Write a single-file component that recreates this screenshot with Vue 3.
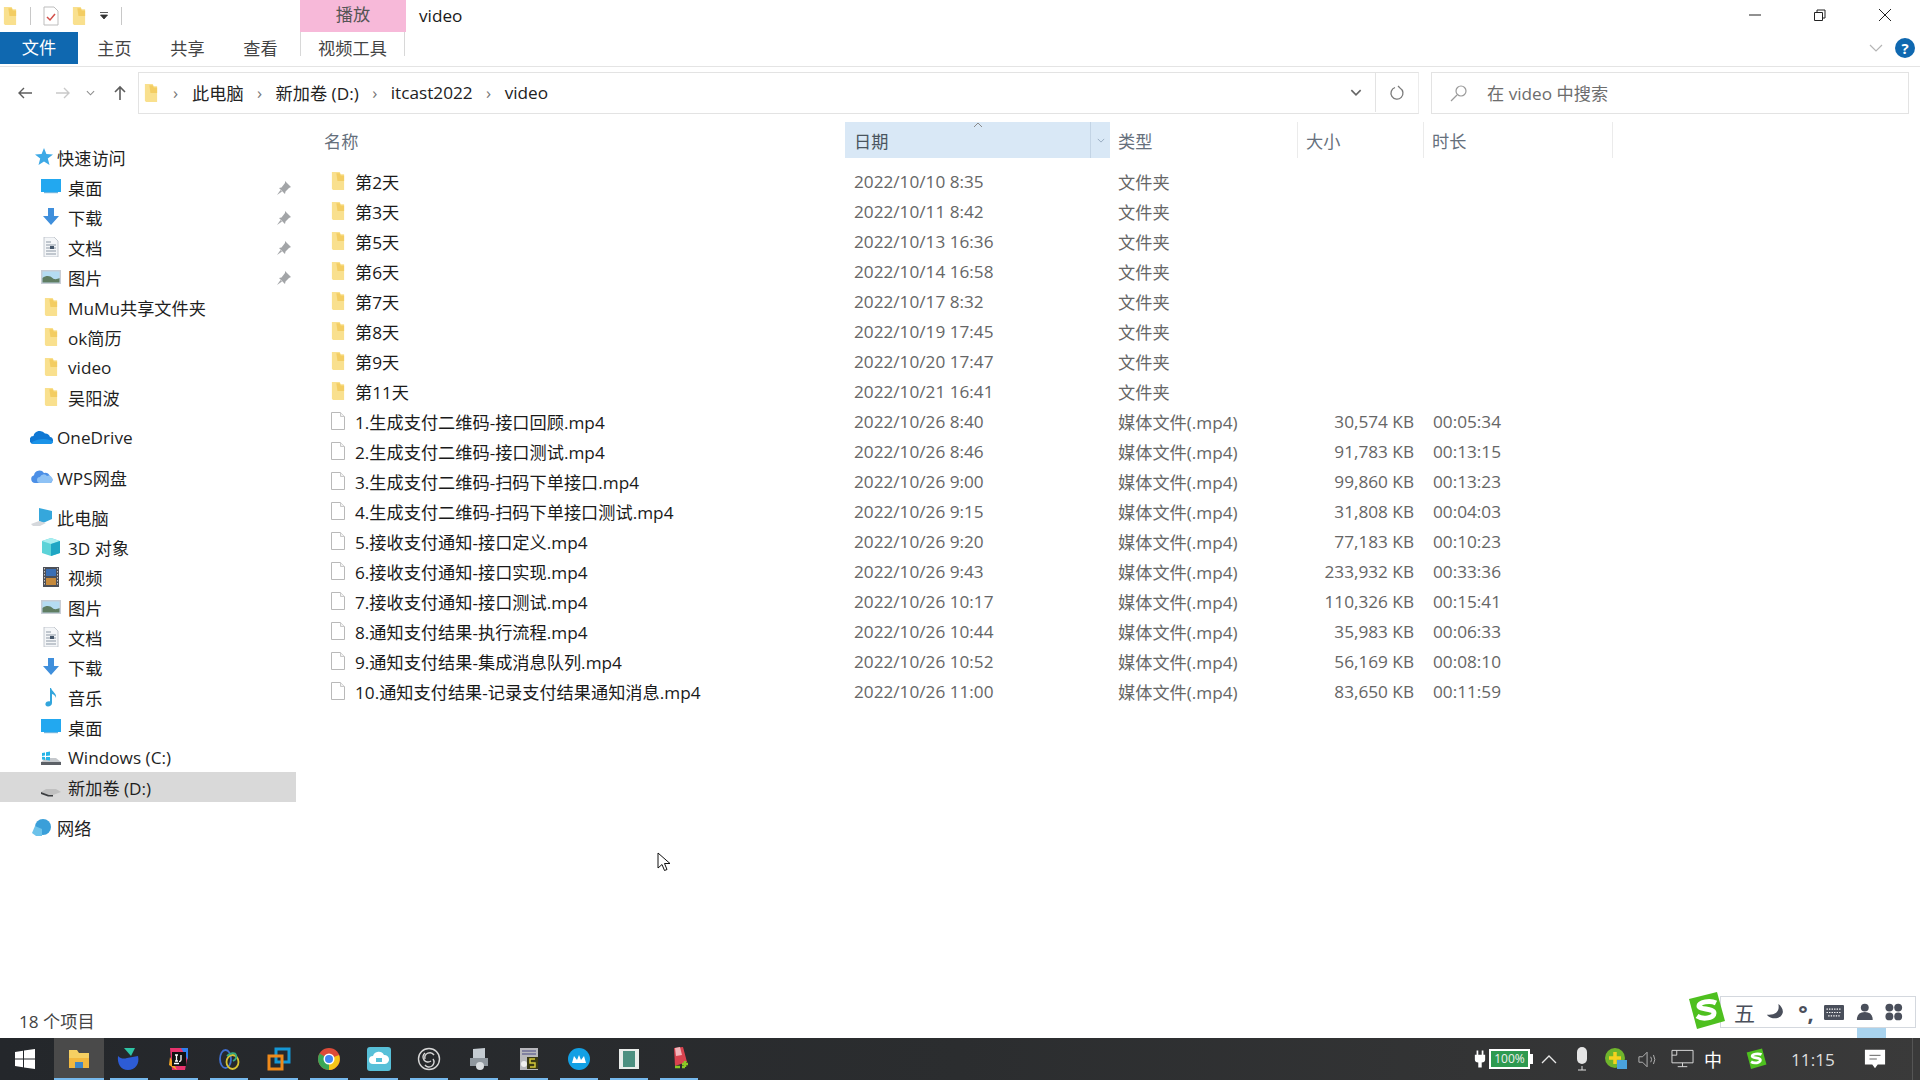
<script setup>
const quickAccess = [
  { label: '桌面', icon: 'desktop', pin: true },
  { label: '下载', icon: 'download', pin: true },
  { label: '文档', icon: 'doc', pin: true },
  { label: '图片', icon: 'pic', pin: true },
  { label: 'MuMu共享文件夹', icon: 'folder' },
  { label: 'ok简历', icon: 'folder' },
  { label: 'video', icon: 'folder' },
  { label: '吴阳波', icon: 'folder' }
]

const thisPc = [
  { label: '3D 对象', icon: 'cube' },
  { label: '视频', icon: 'film' },
  { label: '图片', icon: 'pic' },
  { label: '文档', icon: 'doc' },
  { label: '下载', icon: 'download' },
  { label: '音乐', icon: 'music' },
  { label: '桌面', icon: 'desktop' },
  { label: 'Windows (C:)', icon: 'drivec' },
  { label: '新加卷 (D:)', icon: 'drived', selected: true }
]

const folders = [
  ['第2天', '2022/10/10 8:35'],
  ['第3天', '2022/10/11 8:42'],
  ['第5天', '2022/10/13 16:36'],
  ['第6天', '2022/10/14 16:58'],
  ['第7天', '2022/10/17 8:32'],
  ['第8天', '2022/10/19 17:45'],
  ['第9天', '2022/10/20 17:47'],
  ['第11天', '2022/10/21 16:41']
].map(([name, date]) => ({ name, date, type: '文件夹', size: '', time: '', icon: 'folder' }))

const videos = [
  ['1.生成支付二维码-接口回顾.mp4', '2022/10/26 8:40', '30,574 KB', '00:05:34'],
  ['2.生成支付二维码-接口测试.mp4', '2022/10/26 8:46', '91,783 KB', '00:13:15'],
  ['3.生成支付二维码-扫码下单接口.mp4', '2022/10/26 9:00', '99,860 KB', '00:13:23'],
  ['4.生成支付二维码-扫码下单接口测试.mp4', '2022/10/26 9:15', '31,808 KB', '00:04:03'],
  ['5.接收支付通知-接口定义.mp4', '2022/10/26 9:20', '77,183 KB', '00:10:23'],
  ['6.接收支付通知-接口实现.mp4', '2022/10/26 9:43', '233,932 KB', '00:33:36'],
  ['7.接收支付通知-接口测试.mp4', '2022/10/26 10:17', '110,326 KB', '00:15:41'],
  ['8.通知支付结果-执行流程.mp4', '2022/10/26 10:44', '35,983 KB', '00:06:33'],
  ['9.通知支付结果-集成消息队列.mp4', '2022/10/26 10:52', '56,169 KB', '00:08:10'],
  ['10.通知支付结果-记录支付结果通知消息.mp4', '2022/10/26 11:00', '83,650 KB', '00:11:59']
].map(([name, date, size, time]) => ({ name, date, type: '媒体文件(.mp4)', size, time, icon: 'file' }))

const rows = [...folders, ...videos]

const taskIcons = ['t-explorer', 't-feather', 't-idea', 't-navicat', 't-vm', 't-chrome', 't-cloud', 't-obs', 't-printer', 't-box', 't-mumu', 't-panel', 't-rar']
</script>

<template>
  <div class="screen">
    <!-- icon sprite -->
    <svg class="sprite" aria-hidden="true">
      <symbol id="folder" viewBox="2 1 13 18">
        <path d="M3 2h7l1 2h3v14H4l-1-1z" fill="#f9e08e" />
        <path d="M7 3h3l1 2h3v5H8z" fill="#f3cd63" />
      </symbol>
      <symbol id="file" viewBox="0 0 20 20">
        <path d="M3.5 1.5h9l4 4v13h-13z" fill="#fff" stroke="#b9b9b9" />
        <path d="M12.5 1.5v4h4" fill="#f1f1f1" stroke="#c9c9c9" />
      </symbol>
      <symbol id="desktop" viewBox="0 0 20 20">
        <rect y="2" width="20" height="13" fill="#22a8f0" />
        <rect x="3" y="15" width="14" height="1.2" fill="#6fb6e0" />
      </symbol>
      <symbol id="download" viewBox="0 0 20 20">
        <path d="M7 1h6v8h5l-8 9-8-9h5z" fill="#3f8fdc" />
      </symbol>
      <symbol id="doc" viewBox="0 0 20 20">
        <path d="M3 0h10l4 4v16H3z" fill="#f4f6f8" stroke="#b6bcc4" stroke-width=".8" />
        <path d="M5 5h5M5 8h10M5 11h10M5 14h10M5 17h10" stroke="#8d98a5" stroke-width="1" />
        <rect x="9" y="9" width="4" height="3" fill="#46576b" />
      </symbol>
      <symbol id="pic" viewBox="0 0 20 20">
        <rect y="3" width="20" height="14" fill="#c8ced6" />
        <rect x="1.5" y="4.5" width="17" height="11" fill="#b5dcf2" />
        <path d="M1.5 11c4-3 8-2 10 0s5 1 7 0v4.500h-17z" fill="#5f7d62" />
      </symbol>
      <symbol id="film" viewBox="0 0 20 20">
        <rect x="2" width="16" height="20" fill="#4c4f57" />
        <rect x="5" y="2" width="10" height="7" fill="#3a6fb5" />
        <rect x="5" y="11" width="10" height="7" fill="#c68a3c" />
        <path d="M3.500 1v18M16.500 1v18" stroke="#c8c8c8" stroke-dasharray="1.500 1.500" />
      </symbol>
      <symbol id="cube" viewBox="0 0 20 20">
        <path d="M10 1l9 3v12l-9 3-9-3V4z" fill="#5cd3d8" />
        <path d="M1 4l9 3 9-3-9-3z" fill="#a8eef0" />
        <path d="M10 7l9-3v12l-9 3z" fill="#1fa6c4" />
      </symbol>
      <symbol id="music" viewBox="0 0 20 20">
        <path d="M10 1c1 4 6 5 5 10-.5-2-2-3.500-4-4v9c0 2-2 3.500-4 3.500S4 18 4.500 16.500 7 14 9 14.500V1z" fill="#32a5dc" />
      </symbol>
      <symbol id="drivec" viewBox="0 0 20 20">
        <path d="M0 15l5-4h10l5 4v3H0z" fill="#c4c8cc" />
        <path d="M0 15h20v3H0z" fill="#5c6066" />
        <path d="M1 6l3-.5v3L1 9zM5 5.300l4-.7v4L5 9zM1 9.800l3 .2v3l-3-.4zM5 10h4v3.500l-4-.5z" fill="#26b4e6" />
      </symbol>
      <symbol id="drived" viewBox="0 0 20 20">
        <path d="M0 15l5-3h10l5 3-8 3H8z" fill="#c0c0c0" />
        <path d="M0 15l8 3h4v1.500H7L0 17z" fill="#3b3d40" />
      </symbol>
      <symbol id="star" viewBox="0 0 20 20">
        <path d="M11 1l2.400 6 6.600.4-5.200 4.200 1.700 6.400-5.500-3.600L5.500 18l1.700-6.400L2 7.400 8.600 7z" fill="#3da9e6" />
      </symbol>
      <symbol id="onedrive" viewBox="0 0 24 20">
        <path d="M4 17a4 4 0 0 1-.5-8A6.500 6.500 0 0 1 15 6.500a5 5 0 0 1 5 3.500 3.600 3.600 0 0 1 .5 7z" fill="#0f78d4" />
        <path d="M3 17h17c2 0 3-1 3-2.500C18 11 9 11 2 15z" fill="#1a93e8" />
      </symbol>
      <symbol id="wps" viewBox="0 0 24 20">
        <path d="M5 16a4 4 0 0 1-1-7.800A5.500 5.500 0 0 1 14 6a4.500 4.500 0 0 1 6 4 3 3 0 0 1-1 6z" fill="#4b8fe6" />
        <path d="M10 16a3 3 0 0 1 0-6 4 4 0 0 1 7-1 3.500 3.500 0 0 1 3 7z" fill="#8ec2f5" />
      </symbol>
      <symbol id="pc" viewBox="0 0 24 20">
        <path d="M9 1l13 3v8l-9 4-4-2z" fill="#35a7dc" />
        <path d="M1 17l8-3 7 2-6 3H3z" fill="#d5d8dc" />
      </symbol>
      <symbol id="network" viewBox="0 0 24 20">
        <circle cx="13" cy="10" r="8" fill="#3a9fd9" />
        <path d="M5 9l7 3v7H6l-4-3z" fill="#6cc2ea" />
      </symbol>
      <symbol id="pin" viewBox="0 0 16 16">
        <path d="M9 1l6 6-2 1-3.500 3.500-.5 2.500-6-6 2.500-.5L9 3z" fill="#a3a5a8" />
        <path d="M4.500 10L1 15l5-3.500z" fill="#a3a5a8" />
      </symbol>

      <symbol id="t-explorer" viewBox="0 0 24 24">
        <path d="M2 3h8l2 3h10v15H2z" fill="#f5cf62" />
        <rect x="2" y="11" width="20" height="10" fill="#f2b83f" />
        <rect x="8" y="15" width="8" height="6" fill="#3f86c8" />
      </symbol>
      <symbol id="t-feather" viewBox="0 0 24 24">
        <path d="M7 1h11l-4 8z" fill="#2ec5a5" />
        <path d="M1 9c3 3 6 3 9 2l11-2c2 8-3 14-10 14S0 17 1 9z" fill="#2d5cd6" />
      </symbol>
      <symbol id="t-idea" viewBox="0 0 24 24">
        <path d="M3 1h12l6 6-3 16H5z" fill="#e8336d" />
        <path d="M14 1h7v12z" fill="#2f7ff0" />
        <path d="M3 10l-1 8 8 5z" fill="#f6a723" />
        <rect x="5" y="5" width="14" height="14" fill="#111" />
        <path d="M8 8h3M9.500 8v6M8 14h3M14 8v5q0 1.500-2 1.500M7 16.500h5" stroke="#fff" stroke-width="1.300" fill="none" />
      </symbol>
      <symbol id="t-navicat" viewBox="0 0 24 24" fill="none" stroke-width="1.800">
        <ellipse cx="8.500" cy="12" rx="5.500" ry="9" stroke="#3f6fd0" />
        <ellipse cx="15.500" cy="15" rx="6" ry="7" stroke="#d8c332" />
        <path d="M10 9c3-3 8-4 9-1s-1 5-3 6" stroke="#35a880" />
      </symbol>
      <symbol id="t-vm" viewBox="0 0 24 24" fill="none" stroke-width="3">
        <rect x="9" y="2" width="13" height="13" stroke="#1597d5" />
        <rect x="2" y="9" width="13" height="13" stroke="#ef8a1a" />
      </symbol>
      <symbol id="t-chrome" viewBox="0 0 24 24">
        <circle cx="12" cy="12" r="11" fill="#dd4b39" />
        <path d="M12 12L2.500 6.500A11 11 0 0 0 12 23z" fill="#3aa757" />
        <path d="M12 12v11a11 11 0 0 0 10-15z" fill="#f5c518" />
        <circle cx="12" cy="12" r="5.500" fill="#fff" />
        <circle cx="12" cy="12" r="4" fill="#4285f4" />
      </symbol>
      <symbol id="t-cloud" viewBox="0 0 24 24">
        <rect width="24" height="24" rx="3" fill="#58c0d8" />
        <path d="M6 17a4 4 0 0 1 0-8 6 6 0 0 1 11-1 4.500 4.500 0 0 1 1 9z" fill="#fff" />
        <rect x="9" y="11" width="6" height="4" fill="#58c0d8" />
      </symbol>
      <symbol id="t-obs" viewBox="0 0 24 24" fill="none" stroke="#d7d7d7" stroke-width="1.400">
        <circle cx="12" cy="12" r="10.500" />
        <path d="M8 6a5 5 0 0 0 6 8M17 8a5 5 0 0 0-9 4M8 18a5 5 0 0 0 8-6" />
      </symbol>
      <symbol id="t-printer" viewBox="0 0 24 24">
        <path d="M6 2l12-1v12H6z" fill="#c5ccd2" />
        <path d="M3 11h18v8H3z" fill="#8f979e" />
        <circle cx="13" cy="19" r="4" fill="#d9dde0" />
      </symbol>
      <symbol id="t-box" viewBox="0 0 24 24">
        <rect x="3" y="1" width="18" height="22" fill="#b8b8bd" />
        <path d="M5 4h14M5 7h14" stroke="#6d6d96" stroke-width="1.500" />
        <rect x="10" y="10" width="11" height="12" fill="#3b3a16" />
        <path d="M18 12h-5v4h5v4h-5" stroke="#d6c93a" stroke-width="1.500" fill="none" />
        <circle cx="7" cy="17" r="3" fill="#f0f0f0" />
      </symbol>
      <symbol id="t-mumu" viewBox="0 0 24 24">
        <circle cx="12" cy="12" r="11" fill="#12a0e4" />
        <path d="M5 16l2-7 3 4 2-5 2 5 3-4 2 7z" fill="#fff" />
      </symbol>
      <symbol id="t-panel" viewBox="0 0 24 24">
        <rect x="2" y="2" width="20" height="20" fill="#e9ecea" />
        <rect x="6" y="4" width="12" height="16" fill="#4c8f80" />
      </symbol>
      <symbol id="t-rar" viewBox="0 0 24 24">
        <path d="M7 1l9-1 4 15-12 4z" fill="#d9434f" />
        <path d="M8 1l5-1 2 8-6 1z" fill="#f2b5ba" />
        <path d="M8 20h5M15 17h6M18 14v6M15 20h3" stroke="#8ac926" stroke-width="2.500" />
      </symbol>
      <symbol id="sogou" viewBox="0 0 40 40">
        <path d="M3 8L31 1l8 29-28 8z" fill="#4ec01f" />
        <path d="M30 12c-6-3-17-1-17 3s15 2 15 7-11 7-17 3" fill="none" stroke="#fff" stroke-width="5" />
      </symbol>
    </svg>

    <!-- titlebar -->
    <header class="titlebar">
      <div class="qat">
        <svg class="qat-folder"><use href="#folder" /></svg>
        <i class="qat-sep"></i>
        <svg class="qat-check" viewBox="0 0 16 20">
          <path d="M1 1h10l4 4v14H1z" fill="#fff" stroke="#bdbdbd" />
          <path d="M4 11l3 3 5-6" fill="none" stroke="#d2504a" stroke-width="1.500" />
        </svg>
        <svg class="qat-folder"><use href="#folder" /></svg>
        <svg class="qat-more" viewBox="0 0 10 10">
          <path d="M1 1.500h8M1.500 4l3.500 4 3.500-4z" fill="#333" stroke="#333" stroke-width=".8" />
        </svg>
        <i class="qat-sep"></i>
      </div>
      <div class="play-tab">播放</div>
      <div class="title">video</div>
      <div class="win-btns">
        <svg viewBox="0 0 14 14"><path d="M1 7h12" stroke="#222" /></svg>
        <svg viewBox="0 0 14 14"><path d="M1.500 4.500h8v8h-8zM4 4.500V2h8v8H9.500" fill="none" stroke="#222" /></svg>
        <svg viewBox="0 0 14 14"><path d="M1 1l12 12M13 1L1 13" stroke="#222" /></svg>
      </div>
    </header>

    <!-- ribbon tabs -->
    <nav class="ribbon">
      <div class="tab file-tab">文件</div>
      <div class="tab">主页</div>
      <div class="tab">共享</div>
      <div class="tab">查看</div>
      <div class="tab tools-tab">视频工具</div>
      <div class="ribbon-right">
        <svg class="ribbon-chev" viewBox="0 0 14 8"><path d="M1 1l6 6 6-6" fill="none" stroke="#b5b5b5" stroke-width="1.200" /></svg>
        <div class="help">?</div>
      </div>
    </nav>

    <!-- address row -->
    <div class="address-row">
      <div class="nav-arrows">
        <svg class="arrow" viewBox="0 0 16 16"><path d="M15 8H2M7 3L2 8l5 5" fill="none" stroke="#5d5d5d" stroke-width="1.400" /></svg>
        <svg class="arrow" viewBox="0 0 16 16"><path d="M1 8h13M9 3l5 5-5 5" fill="none" stroke="#c9c9c9" stroke-width="1.400" /></svg>
        <svg class="arrow-small" viewBox="0 0 10 6"><path d="M1 1l4 4 4-4" fill="none" stroke="#8d8d8d" stroke-width="1.200" /></svg>
        <svg class="arrow" viewBox="0 0 16 16"><path d="M8 15V2M3 7l5-5 5 5" fill="none" stroke="#5d5d5d" stroke-width="1.600" /></svg>
      </div>
      <div class="address">
        <svg class="crumb-folder"><use href="#folder" /></svg>
        <span class="crumb-sep first">›</span><span>此电脑</span>
        <span class="crumb-sep">›</span><span>新加卷 (D:)</span>
        <span class="crumb-sep">›</span><span>itcast2022</span>
        <span class="crumb-sep">›</span><span>video</span>
        <svg class="addr-chev" viewBox="0 0 10 6"><path d="M1 1l4 4 4-4" fill="none" stroke="#666" stroke-width="1.400" /></svg>
        <div class="refresh">
          <svg viewBox="0 0 16 16"><path d="M6 2.500A6 6 0 1 0 11 3L9 1" fill="none" stroke="#7a7a7a" stroke-width="1.300" /></svg>
        </div>
      </div>
      <div class="search">
        <svg viewBox="0 0 18 18"><circle cx="11" cy="7" r="5" fill="none" stroke="#9a9a9a" stroke-width="1.200" /><path d="M7 11l-6 6" stroke="#9a9a9a" stroke-width="1.200" /></svg>
        <span>在 video 中搜索</span>
      </div>
    </div>

    <div class="body">
      <!-- navigation tree -->
      <aside class="tree">
        <div class="tree-row group"><svg class="g-icon star"><use href="#star" /></svg>快速访问</div>
        <div v-for="item in quickAccess" :key="item.label" class="tree-row">
          <svg class="i-icon"><use :href="`#${item.icon}`" /></svg>
          {{ item.label }}
          <svg v-if="item.pin" class="pin"><use href="#pin" /></svg>
        </div>
        <div class="tree-row group spaced"><svg class="g-icon"><use href="#onedrive" /></svg>OneDrive</div>
        <div class="tree-row group spaced"><svg class="g-icon"><use href="#wps" /></svg>WPS网盘</div>
        <div class="tree-row group spaced"><svg class="g-icon"><use href="#pc" /></svg>此电脑</div>
        <div
          v-for="item in thisPc"
          :key="item.label + item.icon"
          class="tree-row"
          :class="{ selected: item.selected }"
        >
          <svg class="i-icon"><use :href="`#${item.icon}`" /></svg>
          {{ item.label }}
        </div>
        <div class="tree-row group spaced"><svg class="g-icon"><use href="#network" /></svg>网络</div>
      </aside>

      <!-- file list -->
      <main class="list">
        <div class="head">
          <div class="col name-col">名称</div>
          <div class="col date-col sorted">
            日期
            <svg class="sort-up" viewBox="0 0 10 6"><path d="M1 5l4-4 4 4" fill="none" stroke="#8a8a8a" /></svg>
            <span class="drop"><svg viewBox="0 0 10 6"><path d="M1 1l4 4 4-4" fill="none" stroke="#8aa0b5" /></svg></span>
          </div>
          <div class="col type-col">类型</div>
          <div class="col size-col">大小</div>
          <div class="col time-col">时长</div>
        </div>
        <div v-for="row in rows" :key="row.name" class="row">
          <div class="cell name-col">
            <svg class="file-icon"><use :href="`#${row.icon}`" /></svg>
            {{ row.name }}
          </div>
          <div class="cell date-col">{{ row.date }}</div>
          <div class="cell type-col">{{ row.type }}</div>
          <div class="cell size-col">{{ row.size }}</div>
          <div class="cell time-col">{{ row.time }}</div>
        </div>

        <!-- mouse pointer -->
        <svg class="cursor" viewBox="0 0 14 20">
          <path d="M1 1v15l4-3.500 2.500 6 2.500-1-2.500-6H13z" fill="#fff" stroke="#111" />
        </svg>
      </main>
    </div>

    <footer class="status">18 个项目</footer>

    <!-- taskbar -->
    <div class="taskbar">
      <div class="start">
        <svg viewBox="0 0 20 20"><path d="M0 3l8-1.200V9.500H0zM9 1.600L20 0v9.500H9zM0 10.500h8v7.700L0 17zM9 10.500h11V20L9 18.400z" fill="#fff" /></svg>
      </div>
      <div
        v-for="(icon, i) in taskIcons"
        :key="icon"
        class="task"
        :class="{ active: i === 0 }"
      >
        <svg class="task-icon"><use :href="`#${icon}`" /></svg>
      </div>

      <div class="tray">
        <svg class="t-plug" viewBox="0 0 14 20"><path d="M3 0h2v5h4V0h2v5h2v6q0 3-4 3v6H5v-6q-4 0-4-3V5h2z" fill="#fff" /></svg>
        <div class="battery"><span>100%</span></div>
        <svg class="t-up" viewBox="0 0 16 9"><path d="M1 8l7-7 7 7" fill="none" stroke="#e8e8e8" stroke-width="1.300" /></svg>
        <svg class="t-mic" viewBox="0 0 14 24"><rect x="2" width="10" height="17" rx="5" fill="#e5e5e5" /><path d="M7 19v4M3 23h8" stroke="#ddd" /></svg>
        <svg class="t-green" viewBox="0 0 22 22">
          <circle cx="10" cy="10" r="10" fill="#6fb52c" />
          <path d="M10 4v12M4 10h12" stroke="#f5d21f" stroke-width="3.500" />
          <rect x="12" y="12" width="10" height="9" fill="#4aa3dd" />
        </svg>
        <svg class="t-vol" viewBox="0 0 22 18"><path d="M1 6h4l5-5v16l-5-5H1zM14 6q2 3 0 6M17 4q3 5 0 10" fill="none" stroke="#bbb" /></svg>
        <svg class="t-net" viewBox="0 0 24 20"><path d="M1 1h22v13H1zM6 1v5H1M12 14v4M7 18h10" fill="none" stroke="#ddd" /></svg>
        <span class="t-ime">中</span>
        <svg class="t-sogou"><use href="#sogou" /></svg>
        <span class="t-time">11:15</span>
        <svg class="t-msg" viewBox="0 0 24 22"><path d="M1 1h22v16h-8l-3 4-3-4H1z" fill="#fff" /><path d="M6 7h12M6 11h8" stroke="#555" /></svg>
        <i class="t-desk"></i>
      </div>
    </div>

    <!-- sogou ime floating bar -->
    <div class="ime">
      <svg class="ime-logo"><use href="#sogou" /></svg>
      <span class="ime-wu">五</span>
      <svg class="ime-ico" viewBox="0 0 20 20"><path d="M14 1c2 8-3 13-13 12 3 5 15 7 18-2 1-4-2-8-5-10z" fill="#4a4f5b" /></svg>
      <span class="ime-punc">°,</span>
      <svg class="ime-kb" viewBox="0 0 24 18"><rect width="24" height="18" rx="1.500" fill="#4a4f5b" /><path d="M3 5h18M3 9h18M5 13h14" stroke="#fff" stroke-width="1.400" stroke-dasharray="1.600 1.400" /></svg>
      <svg class="ime-ico" viewBox="0 0 20 20"><circle cx="10" cy="5" r="4.500" fill="#4a4f5b" /><path d="M1 19q0-9 9-9t9 9z" fill="#4a4f5b" /></svg>
      <svg class="ime-ico" viewBox="0 0 20 20"><g fill="#4a4f5b"><circle cx="5" cy="5" r="4.500" /><circle cx="15" cy="5" r="4.500" /><circle cx="5" cy="15" r="4.500" /><circle cx="15" cy="15" r="4.500" /></g></svg>
      <i class="ime-tail"></i>
    </div>
  </div>
</template>

<style scoped>
.screen {
  position: relative;
  width: 1920px;
  height: 1080px;
  display: flex;
  flex-direction: column;
  overflow: hidden;
  background: #fff;
  color: #1a1a1a;
  font: 17.2px "Open Sans", "Noto Sans CJK SC", sans-serif;
}

.sprite {
  position: absolute;
  width: 0;
  height: 0;
}

/* titlebar */
.titlebar {
  height: 32px;
  display: flex;
  flex: none;
}

.qat {
  width: 300px;
  display: flex;
  align-items: center;
  gap: 12px;
  padding: 0 0 0 2px;
  box-sizing: border-box;
}

.qat-folder {
  width: 16px;
  height: 20px;
}

.qat-sep {
  width: 1px;
  height: 18px;
  background: #c8c8c8;
}

.qat-check {
  width: 16px;
  height: 20px;
}

.qat-more {
  width: 10px;
  height: 10px;
}

.play-tab {
  width: 106px;
  background: #f7b9d9;
  color: #555;
  text-align: center;
  line-height: 29px;
}

.title {
  padding-left: 13px;
  line-height: 31px;
}

.win-btns {
  margin-left: auto;
  display: flex;
  align-items: center;
  gap: 51px;
  padding: 0 28px 2px 0;
}

.win-btns svg {
  width: 14px;
  height: 14px;
}

/* ribbon */
.ribbon {
  height: 35px;
  flex: none;
  display: flex;
  box-sizing: border-box;
  border-bottom: 1px solid #e4e4e4;
  color: #444;
}

.tab {
  width: 73px;
  line-height: 33px;
  text-align: center;
}

.file-tab {
  width: 78px;
  height: 32px;
  background: #0f68b0;
  color: #fff;
  line-height: 32px;
}

.tools-tab {
  width: 105px;
  height: 24px;
  margin-left: 3px;
  border-left: 1px solid #d8d8d8;
  border-right: 1px solid #d8d8d8;
  box-sizing: border-box;
}

.ribbon-right {
  margin-left: auto;
  display: flex;
  align-items: center;
  gap: 12px;
  padding: 0 5px 2px 0;
}

.ribbon-chev {
  width: 14px;
  height: 8px;
}

.help {
  width: 20px;
  height: 20px;
  border-radius: 50%;
  background: #0f68b0;
  color: #fff;
  font-size: 15px;
  font-weight: 700;
  line-height: 20px;
  text-align: center;
}

/* address */
.address-row {
  height: 42px;
  margin-top: 5px;
  flex: none;
  display: flex;
}

.nav-arrows {
  width: 138px;
  display: flex;
  align-items: center;
  padding-left: 17px;
  box-sizing: border-box;
}

.arrow {
  width: 16px;
  height: 16px;
  margin-right: 22px;
}

.nav-arrows .arrow:nth-child(2) {
  margin-right: 15px;
}

.arrow-small {
  width: 9px;
  height: 6px;
  margin-right: 17px;
}

.nav-arrows .arrow:last-child {
  margin-right: 0;
}

.address {
  width: 1281px;
  display: flex;
  align-items: center;
  box-sizing: border-box;
  border: 1px solid #e3e3e3;
  border-right-color: #ececec;
  padding-left: 4px;
  padding-bottom: 1px;
  color: #222;
}

.crumb-folder {
  width: 16px;
  height: 20px;
}

.crumb-sep {
  width: 32px;
  color: #777;
  text-align: center;
  font-size: 17px;
}

.crumb-sep.first {
  width: 33px;
}

.addr-chev {
  width: 12px;
  height: 7px;
  margin-left: auto;
  margin-right: 13px;
}

.refresh {
  width: 43px;
  height: 100%;
  display: flex;
  align-items: center;
  justify-content: center;
  border-left: 1px solid #e3e3e3;
  box-sizing: border-box;
}

.refresh svg {
  width: 16px;
  height: 16px;
}

.search {
  width: 478px;
  margin-left: 12px;
  display: flex;
  align-items: center;
  gap: 19px;
  padding-left: 18px;
  padding-bottom: 1px;
  box-sizing: border-box;
  border: 1px solid #e3e3e3;
  color: #6d6d6d;
}

.search svg {
  width: 18px;
  height: 18px;
}

/* body */
.body {
  flex: 1;
  min-height: 0;
  display: flex;
}

.tree {
  width: 296px;
  flex: none;
  padding-top: 28px;
  margin-right: 14px;
}

.tree-row {
  height: 30px;
  position: relative;
  display: flex;
  align-items: center;
  padding-left: 41px;
  color: #1f1f1f;
}

.i-icon {
  width: 20px;
  height: 20px;
  margin-right: 7px;
}

.group {
  padding-left: 30px;
}

.group.spaced {
  margin-top: 10px;
}

.g-icon {
  width: 24px;
  height: 20px;
  margin-right: 3px;
}

.star {
  width: 20px;
  margin-left: 3px;
  margin-right: 4px;
}

.pin {
  position: absolute;
  left: 276px;
  top: 8px;
  width: 16px;
  height: 16px;
}

.selected {
  background: #d9d9d9;
}

.list {
  position: relative;
  flex: 1;
}

.head {
  display: flex;
  height: 36px;
  margin-top: 8px;
  margin-bottom: 8px;
  color: #66707c;
}

.col {
  display: flex;
  align-items: center;
  position: relative;
  box-sizing: border-box;
}

.name-col {
  width: 535px;
  padding-left: 14px;
}

.date-col {
  width: 265px;
  padding-left: 9px;
}

.type-col {
  width: 188px;
  padding-left: 8px;
}

.size-col {
  width: 126px;
  padding-left: 8px;
}

.time-col {
  width: 189px;
  padding-left: 8px;
}

.head .type-col,
.head .size-col,
.head .time-col {
  border-right: 1px solid #ebebeb;
}

.sorted {
  background: #d9e8f6;
  color: #4a5560;
}

.sort-up {
  position: absolute;
  left: 128px;
  top: 0;
  width: 10px;
  height: 6px;
}

.drop {
  position: absolute;
  right: 0;
  top: 0;
  width: 20px;
  height: 100%;
  display: flex;
  align-items: center;
  justify-content: center;
  border-left: 1px solid #c3d4e5;
  box-sizing: border-box;
}

.drop svg {
  width: 8px;
  height: 5px;
}

.row {
  display: flex;
  height: 30px;
  color: #666;
}

.cell {
  display: flex;
  align-items: center;
  box-sizing: border-box;
}

.cell.name-col {
  padding-left: 18px;
  color: #1a1a1a;
}

.file-icon {
  width: 20px;
  height: 20px;
  margin-right: 7px;
}

.cell.size-col {
  justify-content: flex-end;
  padding-right: 10px;
}

.cell.time-col {
  padding-left: 9px;
}

.cursor {
  position: absolute;
  left: 347px;
  top: 738px;
  width: 14px;
  height: 20px;
}

/* status */
.status {
  height: 34px;
  flex: none;
  padding-left: 19px;
  line-height: 36px;
  color: #444;
}

/* taskbar */
.taskbar {
  height: 42px;
  flex: none;
  display: flex;
  background: linear-gradient(90deg, #24272b, #2b2d2f 50%, #3a3a3a);
}

.start {
  width: 54px;
  padding-right: 4px;
  box-sizing: border-box;
  display: flex;
  align-items: center;
  justify-content: center;
}

.start svg {
  width: 20px;
  height: 20px;
}

.task {
  position: relative;
  width: 50px;
  display: flex;
  align-items: center;
  justify-content: center;
}

.task.active {
  background: #4a4a4a;
}

.task::after {
  content: "";
  position: absolute;
  left: 6px;
  right: 6px;
  bottom: 0;
  height: 2px;
  background: #76b9ed;
}

.task.active::after {
  left: 0;
  right: 0;
}

.task-icon {
  width: 24px;
  height: 26px;
}

.tray {
  margin-left: auto;
  display: flex;
  align-items: center;
  color: #eee;
}

.t-plug {
  width: 12px;
  height: 20px;
  margin-right: 3px;
}

.battery {
  position: relative;
  width: 41px;
  height: 20px;
  box-sizing: border-box;
  border: 2px solid #fff;
  background: #2e9a50;
  font-size: 12px;
  line-height: 16px;
  text-align: center;
  margin-right: 11px;
}

.battery::after {
  content: "";
  position: absolute;
  right: -5px;
  top: 3px;
  width: 3px;
  height: 10px;
  background: #fff;
}

.t-up {
  width: 16px;
  height: 9px;
  margin-right: 18px;
}

.t-mic {
  width: 14px;
  height: 24px;
  margin-right: 16px;
}

.t-green {
  width: 22px;
  height: 22px;
  margin-right: 11px;
}

.t-vol {
  width: 20px;
  height: 17px;
  margin-right: 13px;
}

.t-net {
  width: 23px;
  height: 20px;
  margin-right: 10px;
}

.t-ime {
  width: 20px;
  font-size: 18px;
  margin-right: 21px;
  color: #fff;
}

.t-sogou {
  width: 22px;
  height: 22px;
  margin-right: 24px;
}

.t-time {
  width: 46px;
  margin-right: 27px;
  color: #ddd;
}

.t-msg {
  width: 22px;
  height: 22px;
  margin-right: 26px;
}

.t-desk {
  width: 1px;
  height: 42px;
  background: #555;
  margin-right: 7px;
}

/* ime */
.ime {
  position: absolute;
  left: 1720px;
  top: 996px;
  width: 196px;
  height: 32px;
  box-sizing: border-box;
  border: 1px solid #d4d8de;
  background: #fff;
  display: flex;
  align-items: center;
  color: #4a4f5b;
  padding-left: 13px;
}

.ime-logo {
  position: absolute;
  left: -35px;
  top: -6px;
  width: 40px;
  height: 40px;
}

.ime-wu {
  font-size: 21px;
  width: 36px;
}

.ime-ico {
  width: 20px;
  height: 20px;
  margin-right: 12px;
}

.ime-punc {
  font-size: 22px;
  font-weight: 700;
  width: 29px;
  padding-left: 3px;
  line-height: 20px;
}

.ime-kb {
  width: 23px;
  height: 17px;
  margin-right: 12px;
}

.ime-tail {
  position: absolute;
  left: 136px;
  top: 31px;
  width: 29px;
  height: 10px;
  background: #a9d3ee;
}
</style>

<style>
html,
body {
  margin: 0;
  background: #fff;
}
</style>
